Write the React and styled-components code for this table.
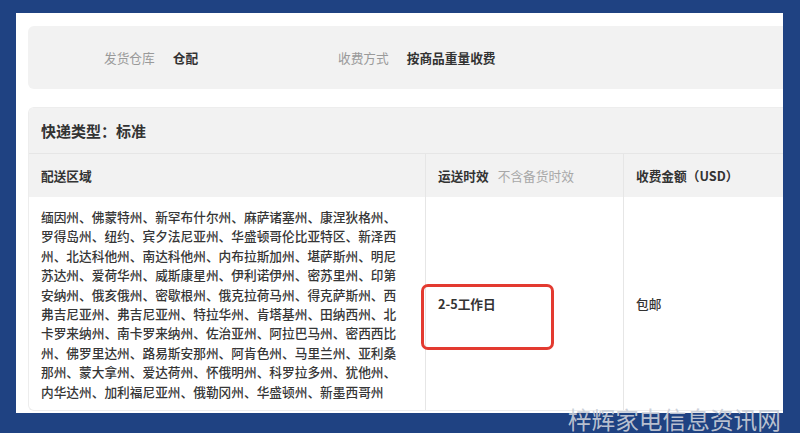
import React from "react";
import styled, { createGlobalStyle } from "styled-components";

const colors = {
  navy: "#1f4282",
  panel: "#ffffff",
  box: "#f2f2f2",
  line: "#e6e6e6",
  text: "#333333",
  muted: "#9a9a9a",
  red: "#e33a30",
};

const font = `"Noto Sans CJK SC", "Noto Sans", sans-serif`;

const GlobalStyle = createGlobalStyle`
  html, body {
    margin: 0;
    padding: 0;
    background: ${colors.navy};
    font-family: ${font};
  }
  * { box-sizing: border-box; }
`;

const Frame = styled.div`
  position: relative;
  width: 800px;
  height: 433px;
  padding: 13px 17px 0 16px;
  overflow: hidden;
`;

const Panel = styled.div`
  width: 767px;
  height: 400px;
  background: ${colors.panel};
  padding: 13px 0 0 12px;
  overflow: hidden;
`;

const InfoBox = styled.div`
  height: 63px;
  background: ${colors.box};
  border-radius: 6px 0 0 6px;
  display: flex;
  align-items: center;
  padding-left: 76px;
`;

const InfoGroup = styled.div`
  width: ${(p) => p.width || "auto"};
  display: flex;
  align-items: center;
  gap: 18px;
  font-size: 12.7px;
`;

const Label = styled.span`
  color: ${colors.muted};
`;

const Value = styled.span`
  color: ${colors.text};
  font-weight: 600;
`;

const ExpressBox = styled.div`
  margin-top: 18px;
  border: 1px solid #ededed;
  border-right: none;
  border-radius: 6px 0 0 6px;
  overflow: hidden;
`;

const TitleBar = styled.div`
  height: 45px;
  background: ${colors.box};
  display: flex;
  align-items: center;
  padding-left: 12px;
  font-size: 15px;
  font-weight: 700;
  color: ${colors.text};
`;

const Table = styled.div`
  display: grid;
  grid-template-columns: 396px 198px 1fr;
`;

const HeadCell = styled.div`
  height: 44px;
  background: ${colors.box};
  border-top: 1px solid ${colors.line};
  border-left: ${(p) => (p.first ? "none" : `1px solid ${colors.line}`)};
  display: flex;
  align-items: center;
  gap: 9px;
  padding-left: 12px;
  font-size: 12.7px;
  font-weight: 700;
  color: ${colors.text};
`;

const HeadNote = styled.span`
  font-weight: 400;
  color: #a8a8a8;
`;

const BodyCell = styled.div`
  height: 213px;
  border-left: ${(p) => (p.first ? "none" : `1px solid ${colors.line}`)};
  padding: ${(p) => (p.first ? "10px 0 0 12px" : "0 0 0 12px")};
  display: flex;
  align-items: ${(p) => (p.first ? "flex-start" : "center")};
  font-size: 12.7px;
  color: ${colors.text};
`;

const Regions = styled.p`
  margin: 0;
  width: 360px;
  line-height: 19.4px;
  font-weight: 500;
  color: #363636;
`;

const RegionLine = styled.span`
  display: block;
  height: 19.4px;
  white-space: nowrap;
`;

const Marked = styled.span`
  position: relative;
  font-weight: 600;
`;

const Highlight = styled.span`
  position: absolute;
  left: -17px;
  top: -10px;
  width: 133px;
  height: 66px;
  border: 3px solid ${colors.red};
  border-radius: 7px;
`;

const Plain = styled.span`
  font-weight: 500;
`;

const Watermark = styled.div`
  position: absolute;
  right: 19px;
  bottom: 1px;
  font-family: ${font};
  font-size: 23.7px;
  line-height: 26px;
  color: rgba(200, 205, 215, 0.92);
`;

const regionLines = [
  "缅因州、佛蒙特州、新罕布什尔州、麻萨诸塞州、康涅狄格州、",
  "罗得岛州、纽约、宾夕法尼亚州、华盛顿哥伦比亚特区、新泽西",
  "州、北达科他州、南达科他州、内布拉斯加州、堪萨斯州、明尼",
  "苏达州、爱荷华州、威斯康星州、伊利诺伊州、密苏里州、印第",
  "安纳州、俄亥俄州、密歇根州、俄克拉荷马州、得克萨斯州、西",
  "弗吉尼亚州、弗吉尼亚州、特拉华州、肯塔基州、田纳西州、北",
  "卡罗来纳州、南卡罗来纳州、佐治亚州、阿拉巴马州、密西西比",
  "州、佛罗里达州、路易斯安那州、阿肯色州、马里兰州、亚利桑",
  "那州、蒙大拿州、爱达荷州、怀俄明州、科罗拉多州、犹他州、",
  "内华达州、加利福尼亚州、俄勒冈州、华盛顿州、新墨西哥州",
];

export default function App() {
  return (
    <>
      <GlobalStyle />
      <Frame>
        <Panel>
          <InfoBox>
            <InfoGroup width="234px">
              <Label>发货仓库</Label>
              <Value>仓配</Value>
            </InfoGroup>
            <InfoGroup>
              <Label>收费方式</Label>
              <Value>按商品重量收费</Value>
            </InfoGroup>
          </InfoBox>
          <ExpressBox>
            <TitleBar>快递类型：标准</TitleBar>
            <Table>
              <HeadCell first>配送区域</HeadCell>
              <HeadCell>
                运送时效<HeadNote>不含备货时效</HeadNote>
              </HeadCell>
              <HeadCell>收费金额（USD）</HeadCell>
              <BodyCell first>
                <Regions>
                  {regionLines.map((line) => (
                    <RegionLine key={line}>{line}</RegionLine>
                  ))}
                </Regions>
              </BodyCell>
              <BodyCell>
                <Marked>
                  2-5工作日
                  <Highlight />
                </Marked>
              </BodyCell>
              <BodyCell>
                <Plain>包邮</Plain>
              </BodyCell>
            </Table>
          </ExpressBox>
        </Panel>
        <Watermark>梓辉家电信息资讯网</Watermark>
      </Frame>
    </>
  );
}
